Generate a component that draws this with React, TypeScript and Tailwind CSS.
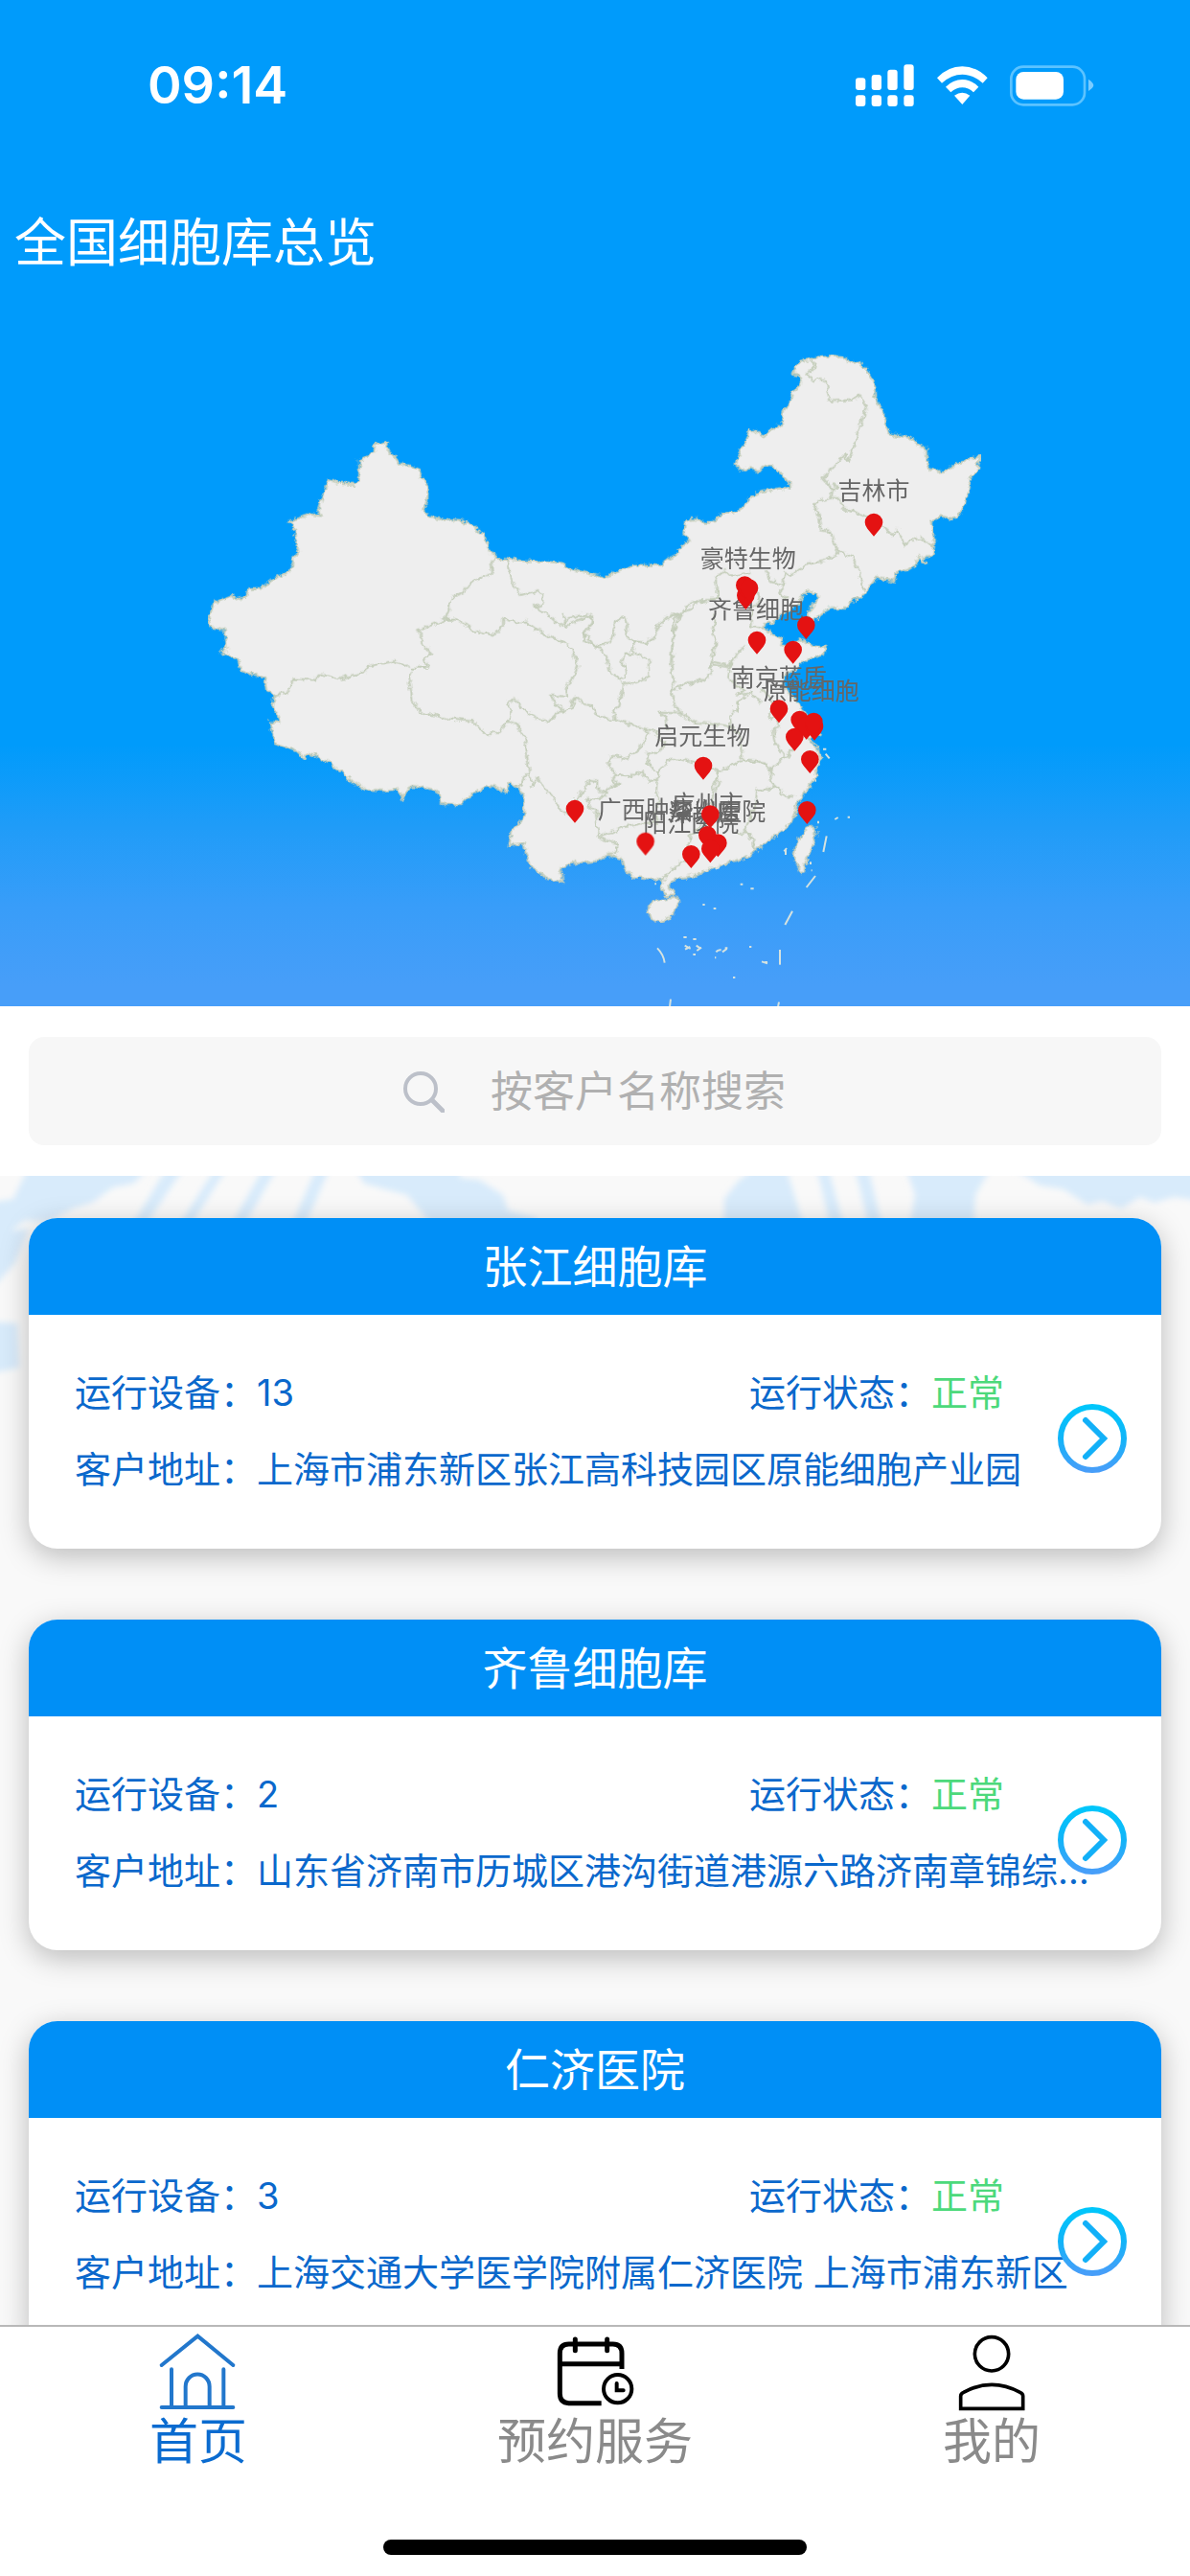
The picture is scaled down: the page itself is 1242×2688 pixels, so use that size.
import { useState } from "react";

const outline =
  "M1175,1388 1195,1394 1215,1386 1212,1404 1220,1420 1236,1430 1250,1450 1275,1456 1312,1470 1322,1500 1340,1525 1338,1575 1325,1600 1345,1617 1385,1624 1440,1628 1475,1645 1510,1670 1520,1690 1535,1725 1555,1748 1585,1750 1640,1756 1700,1757 1760,1762 1780,1780 1820,1790 1860,1800 1895,1808 1940,1785 1990,1768 2065,1770 2090,1750 2120,1735 2122,1722 2160,1692 2140,1670 2145,1635 2165,1623 2185,1624 2210,1637 2230,1636 2260,1610 2300,1606 2325,1590 2340,1565 2380,1540 2410,1536 2440,1528 2475,1532 2474,1515 2460,1500 2440,1478 2420,1460 2390,1457 2375,1477 2350,1465 2320,1472 2303,1455 2315,1420 2335,1375 2350,1345 2395,1363 2420,1345 2445,1330 2450,1300 2455,1285 2485,1225 2508,1205 2505,1175 2480,1172 2490,1150 2510,1130 2540,1123 2570,1115 2615,1112 2640,1120 2660,1132 2685,1132 2700,1142 2722,1170 2730,1185 2738,1215 2740,1245 2755,1270 2765,1290 2772,1330 2785,1360 2820,1365 2850,1370 2880,1395 2900,1405 2902,1440 2910,1465 2935,1478 2960,1475 2980,1465 2990,1452 3020,1445 3040,1434 3072,1430 3062,1450 3058,1475 3035,1505 3030,1540 3025,1570 3008,1600 2995,1625 2948,1615 2915,1635 2922,1670 2925,1710 2920,1740 2890,1742 2900,1768 2875,1740 2865,1770 2840,1785 2805,1792 2800,1820 2745,1808 2720,1840 2700,1865 2665,1885 2645,1905 2600,1905 2575,1920 2550,1945 2530,1925 2540,1900 2565,1870 2550,1852 2515,1858 2500,1890 2460,1915 2420,1950 2395,1950 2392,1970 2420,1985 2450,2000 2445,2020 2480,2025 2490,2010 2510,1998 2540,2020 2560,2025 2585,2025 2580,2050 2540,2060 2515,2070 2490,2095 2450,2115 2455,2145 2470,2170 2490,2190 2505,2210 2525,2240 2550,2255 2570,2270 2570,2295 2525,2310 2545,2325 2560,2340 2570,2380 2560,2400 2550,2440 2520,2480 2495,2520 2490,2550 2475,2575 2450,2600 2420,2620 2395,2640 2370,2660 2340,2685 2280,2700 2240,2715 2210,2725 2180,2740 2110,2752 2092,2775 2110,2800 2085,2802 2073,2780 2075,2752 2040,2750 1980,2745 1955,2720 1950,2690 1905,2675 1870,2695 1835,2700 1800,2700 1755,2715 1762,2760 1740,2755 1710,2750 1690,2730 1660,2715 1645,2665 1640,2638 1595,2645 1600,2605 1625,2580 1640,2555 1640,2490 1610,2455 1595,2448 1585,2480 1550,2462 1530,2458 1500,2475 1470,2490 1445,2517 1380,2517 1378,2490 1365,2475 1330,2465 1290,2460 1270,2472 1260,2502 1250,2470 1200,2475 1145,2470 1105,2450 1070,2415 1030,2390 990,2365 965,2358 955,2375 930,2352 900,2340 860,2325 850,2290 845,2260 875,2260 868,2235 855,2215 860,2175 835,2165 828,2120 800,2115 755,2100 745,2065 720,2050 690,2040 710,2032 708,2000 700,1970 662,1965 652,1925 662,1915 670,1890 690,1878 710,1870 730,1865 738,1876 770,1870 780,1842 820,1840 850,1815 905,1790 915,1770 920,1745 935,1725 925,1690 920,1645 902,1632 935,1622 975,1610 1005,1615 995,1595 1010,1550 1028,1502 1060,1513 1105,1518 1125,1505 1125,1440 1145,1430 1170,1415Z";

const westBorders = [
  "M955,428 938,440 942,475 908,490 880,500 850,535 815,548 795,620 705,655 720,660 720,690 748,725 728,740 742,770 685,770",
  "M985,432 1003,500 1030,543 1085,528 1102,545 1095,575 1070,580 1110,600 1155,640 1180,615 1240,603 1255,610 1252,635 1228,660 1228,680 1262,705",
  "M795,620 825,620 870,640 880,655 950,667 975,640 975,615 1020,633 1045,625 1090,658 1150,685 1190,710 1210,765 1195,800 1170,840 1175,860 1125,857 1140,885 1165,905 1140,915 1120,938 1085,930 1045,905 1010,865 992,880 1000,910 990,938 965,975 915,975 880,938 800,930 720,910 690,875 680,820 690,780",
  "M262,855 300,848 320,805 385,808 405,790 465,805 540,785 555,765 635,750 680,768",
  "M990,938 1015,945 1045,995 1057,1105 1040,1110 1035,1135 1015,1140",
  "M1057,1105 1065,1138 1080,1112 1110,1150 1135,1180 1165,1228 1200,1230 1205,1175 1230,1150 1245,1120",
  "M1165,905 1190,895 1205,860",
];

const centralBorders = [
  "M362,342 410,330 430,265 455,250 462,275 460,310 480,325 520,333 545,320 560,280 600,245 630,240",
  "M362,342 375,345 400,380 410,425 445,448 462,430 460,405 445,395 455,365 480,365 530,385 532,440 495,455 450,460 440,530 420,545 425,570",
  "M480,365 485,340 495,325",
  "M280,530 305,500 330,525 355,530 370,565 440,575 515,600 560,612",
  "M262,240 270,280 350,245 355,270 330,300 362,342",
  "M630,240 610,265 605,330 600,400 610,465 600,485 615,530 630,550 565,548 580,560 590,600",
  "M630,240 670,225 680,205 740,195",
  "M740,265 730,300 745,330 730,370 725,430 700,450 635,465 600,485",
  "M730,400 790,410",
  "M630,550 670,580 720,585 800,600",
  "M840,500 805,515 805,545 785,560 790,600 815,620 825,700",
  "M515,600 530,615 515,650 480,680 450,700 440,690 410,690 405,720 430,745 415,770 440,775",
  "M555,612 580,650 570,670 525,680 530,710 560,740 600,695 650,700 700,715 750,735 825,700 900,710",
  "M430,745 470,755 490,735 520,745 530,770 555,760",
  "M560,730 555,800 565,820 550,860 560,890",
  "M345,760 370,765 370,795 400,800 405,785 440,775 425,760",
  "M400,800 375,825 340,820 345,850 375,860 365,890 375,935 400,930 450,910 520,895 560,900",
  "M375,935 380,945 430,960 430,985 405,995",
  "M660,930 655,980 640,1015 600,1045 575,1070",
  "M660,930 700,905 740,890",
  "M800,925 850,930 865,985",
  "M750,735 735,780 730,830 740,870",
  "M575,1125 610,1122",
];

const northBorders = [
  "M440,103 452,125 430,153 450,172 470,165 485,175 497,235 575,232 590,215 615,255 585,330 580,365 555,430 545,405 475,475 505,510 500,540 535,540 540,575 575,582 600,590 640,620 665,630 695,655 710,640 735,685 755,672 780,665 825,690",
  "M505,495 520,502 510,515 498,510",
  "M500,540 450,555 465,600 470,640 500,645 520,700 570,725 600,800 602,830",
  "M525,700 520,715 480,735 420,750 380,780 360,770 350,812 310,800 300,765",
  "M350,812 340,840 365,855",
  "M0,912 30,905 60,870 110,855 145,855 145,830 140,790 170,765 190,785 250,770",
  "M270,830 280,860 255,880 250,940 290,950",
  "M140,900 130,960 145,990 125,1050 190,1065 200,1035 235,1000",
  "M30,905 10,960 5,1020 10,1080",
];

const eastBorders = [
  "M310,390 300,440 320,460 350,480 330,495 370,490 400,520",
  "M400,480 430,500 440,530 430,560 465,590 440,605 445,640 475,690 430,730 445,750",
  "M475,690 500,670 510,660",
];

const southBorders = [
  "M585,40 640,45 680,70 670,90 675,110 690,125 630,135 625,180 600,240 590,265 615,285 630,320",
  "M690,125 720,150 750,155",
  "M505,75 510,110 500,140",
];

const islands = [
  "M290,505 305,480 340,475 385,468 388,485 370,510 360,535 330,548 295,535Z",
  "M768,390 745,350 750,310 765,280 780,260 800,245 815,255 812,290 800,320 785,345 778,388Z",
];

const dashes = [
  "M848,277 838,327",
  "M813,402 785,438",
  "M741,512 718,555",
  "M702,633V680",
  "M318,628Q338,648 341,674",
  "M360,788 357,812",
  "M699,797 696,812",
];

const reefs = [
  "M400,594h10M430,600h10M404,620l18,10M405,632l16,-8M440,620l12,8M442,636l14,-10M430,648h8",
  "M502,640Q508,632 518,634M522,640l14,-10M530,628h8M498,658h4",
  "M645,670l18,6M655,672h8M606,624h7M555,720h7",
  "M578,428h8M610,442h10M460,492h7M494,504h8M310,427h5",
  "M715,325l8,-10M720,318v18M874,225l10,-6M914,218h7M798,358v8M800,385h3M822,230v8",
  "M837,5h10M845,20l12,14M812,104h4M486,375h6M500,380l12,-4",
  "M838,-430h10M860,-440h8M852,-445l6,8",
];

// head centre of every pin, later ones are drawn on top
const pins = [
  [2736, 1636], [2335, 1865], [2332, 1833], [2346, 1842], [2524, 1958], [2370, 2005],
  [2483, 2035], [2439, 2220], [2504, 2254], [2488, 2308], [2525, 2272], [2550, 2275],
  [2548, 2260], [2536, 2378], [2202, 2398], [1800, 2533], [2527, 2537], [2224, 2550],
  [2215, 2615], [2248, 2640], [2224, 2658], [2164, 2675], [2021, 2635],
];

const labels = [
  { name: "吉林市", x: 2736, y: 1535 },
  { name: "豪特生物", x: 2342, y: 1748 },
  { name: "齐鲁细胞", x: 2367, y: 1907 },
  { name: "南京蓝盾", x: 2438, y: 2121 },
  { name: "原能细胞", x: 2540, y: 2163 },
  { name: "启元生物", x: 2200, y: 2303 },
  { name: "广西肿瘤", x: 2021, y: 2536 },
  { name: "深圳库", x: 2205, y: 2544 },
  { name: "广州市", x: 2215, y: 2518 },
  { name: "华大医院", x: 2248, y: 2540 },
  { name: "阳江医院", x: 2164, y: 2578 },
];

const banks = [
  { name: "张江细胞库", devices: 13, status: "正常", address: "上海市浦东新区张江高科技园区原能细胞产业园" },
  { name: "齐鲁细胞库", devices: 2, status: "正常", address: "山东省济南市历城区港沟街道港源六路济南章锦综…" },
  { name: "仁济医院", devices: 3, status: "正常", address: "上海交通大学医学院附属仁济医院 上海市浦东新区" },
];

function StatusBar() {
  return (
    <div className="flex h-[178px] items-center justify-between pr-[100px] pl-[154px]">
      <span className="text-[54px] leading-none font-semibold">09:14</span>
      <svg className="h-[44px] w-[250px]" viewBox="90 140 750 132" fill="#fff">
        <rect x="93" y="183" width="31" height="38" rx="9" />
        <rect x="143" y="173" width="31" height="48" rx="9" />
        <rect x="193" y="157" width="31" height="64" rx="9" />
        <rect x="244" y="141" width="31" height="80" rx="9" />
        <rect x="93" y="237" width="31" height="35" rx="9" />
        <rect x="143" y="237" width="31" height="35" rx="9" />
        <rect x="193" y="237" width="31" height="35" rx="9" />
        <rect x="244" y="237" width="31" height="35" rx="9" />
        <path d="M348,183Q382,147 427,147T506,183L491,199Q461,172 427,172T363,199Z" />
        <path d="M375,211Q398,188 427,188T478,211L462,228Q446,213 427,213T391,228Z" />
        <path d="M402,238Q427,220 451,238L427,266Z" />
        <rect x="580" y="148" width="230" height="119" rx="38" fill="none" stroke="#5cc3ff" strokeWidth="8" />
        <rect x="595" y="164" width="149" height="86" rx="24" />
        <path d="M822,187Q838,198 838,206T822,224Z" fill="#7accff" />
      </svg>
    </div>
  );
}

function Borders({ paths, shift }: { paths: string[]; shift: string }) {
  return (
    <g transform={shift}>
      {paths.map((d) => (
        <path key={d} d={d} />
      ))}
    </g>
  );
}

function ChinaMap() {
  return (
    <svg className="block w-full" viewBox="0 1020 3726 2130" role="img" aria-label="全国细胞库分布">
      <defs>
        <filter id="coast" x="0" y="0" width="100%" height="100%" colorInterpolationFilters="sRGB">
          <feTurbulence type="fractalNoise" baseFrequency="0.05" numOctaves="3" seed="4" />
          <feDisplacementMap in="SourceGraphic" scale="22" xChannelSelector="R" yChannelSelector="G" />
        </filter>
      </defs>
      <g filter="url(#coast)" fill="none" stroke="#c5cebb" strokeWidth="6" strokeLinejoin="round">
        <path d={outline} fill="#eee" />
        <Borders paths={westBorders} shift="translate(600 1320)" />
        <Borders paths={centralBorders} shift="translate(1500 1680)" />
        <Borders paths={northBorders} shift="translate(2100 1020)" />
        <Borders paths={eastBorders} shift="translate(1980 1680)" />
        <Borders paths={southBorders} shift="translate(1740 2340)" />
        <g fill="#eee">
          <Borders paths={islands} shift="translate(1740 2340)" />
        </g>
      </g>
      <g fill="none" stroke="#d5e2df" strokeWidth="6">
        <Borders paths={dashes} shift="translate(1740 2340)" />
        <Borders paths={reefs} shift="translate(1740 2340)" />
      </g>
      <g fill="#666" fontSize="75" textAnchor="middle" dominantBaseline="central">
        {labels.map((label) => (
          <text key={label.name} x={label.x} y={label.y}>
            {label.name}
          </text>
        ))}
      </g>
      <g fill="#e41212">
        {pins.map(([x, y]) => (
          <path
            key={`${x}-${y}`}
            transform={`translate(${x} ${y})`}
            d="M0,-29A28,28 0 0 1 28,-1Q28,10 20,19L0,43L-20,19Q-28,10 -28,-1A28,28 0 0 1 0,-29Z"
          />
        ))}
      </g>
    </svg>
  );
}

function SearchBar() {
  return (
    <div className="bg-white px-[30px] py-8">
      <label className="flex h-[113px] items-center justify-center gap-[48px] rounded-2xl bg-[#f7f7f7]">
        <svg className="h-[44px] w-[44px]" viewBox="0 0 44 44" fill="none" stroke="#bcc0c9" strokeWidth="4">
          <circle cx="19" cy="19" r="16" />
          <path d="M31 31l11 11" strokeWidth="5" strokeLinecap="round" />
        </svg>
        <input
          type="text"
          aria-label="按客户名称搜索"
          placeholder="按客户名称搜索"
          className="w-[310px] bg-transparent text-[44px] leading-[60px] outline-none placeholder:text-[#b0b0b0]"
        />
      </label>
    </div>
  );
}

function Backdrop() {
  return (
    <svg className="absolute top-0 left-0 w-full" viewBox="0 0 1242 240" fill="#d8ebfb" aria-hidden="true">
      <defs>
        <filter id="soft">
          <feGaussianBlur stdDeviation="3" />
        </filter>
      </defs>
      <g filter="url(#soft)">
        <path d="M30,-10H155L140,8 118,12 96,28 76,34 50,48 26,46 8,60 -10,60V28L14,24Z" />
        <path d="M175,-10h18l-40,60h-14zM226,-10h12l-38,60h-12zM276,-10h14l-34,60h-14zM331,-10h14l-26,60h-14z" />
        <path d="M370,-10H480V2L500,4 525,20 530,36 560,44V50H450L425,20 380,8Z" />
        <path d="M790,-10H820L838,50H756V24L770,6Z" />
        <path d="M852,-10h12l16,60h-14zM892,-10h14l14,60h-14z" />
        <path d="M945,-10H1035L1018,20 1016,50H950L955,20Z" />
        <path d="M1055,-10H1252V26L1225,22 1205,28 1190,22 1170,34 1150,26 1135,30 1110,14 1085,10Z" />
        <path d="M-10,60 30,55 16,90 -10,120ZM-10,152 18,154 20,200 -10,206Z" />
      </g>
    </svg>
  );
}

function BankCard({ bank }: { bank: (typeof banks)[number] }) {
  return (
    <article className="relative rounded-[30px] bg-white shadow-[0_8px_30px_rgba(0,0,0,0.25)]">
      <h2 className="rounded-t-[30px] bg-[#008ff6] text-center text-[47px] leading-[101px] text-white">{bank.name}</h2>
      <div className="flex h-[244px] flex-col px-[48px] pt-[41px] text-[38px] leading-[80px] text-[#0a68cc]">
        <div className="flex">
          <p className="flex-1">运行设备：{bank.devices}</p>
          <p className="w-[382px]">
            运行状态：<span className="text-[#4cd97b]">{bank.status}</span>
          </p>
        </div>
        <p className="overflow-hidden whitespace-nowrap">客户地址：{bank.address}</p>
      </div>
      <button type="button" aria-label={`查看${bank.name}`} className="absolute top-[193px] right-[35px]">
        <svg className="h-[74px] w-[74px]" viewBox="0 0 74 74" fill="none" strokeWidth="6">
          <defs>
            <linearGradient id="ring" x1="0" y1="0" x2="0" y2="1">
              <stop offset="0" stopColor="#00c6fb" />
              <stop offset="0.5" stopColor="#12b4f8" />
              <stop offset="1" stopColor="#479ef9" />
            </linearGradient>
          </defs>
          <circle cx="37" cy="37" r="33" stroke="url(#ring)" />
          <path d="M30 18l19 19-19 19" stroke="#12b0f8" strokeLinecap="round" />
        </svg>
      </button>
    </article>
  );
}

function HomeIcon() {
  return (
    <svg className="h-[84px] w-[84px]" viewBox="105 63 252 252" fill="none" stroke="#2277cc" strokeWidth="12" strokeLinecap="round">
      <path d="M116,171 229,80 340,171M147,184V300M310,184V300M116,303H340" />
      <path d="M191,300V238A37,38 0 0 1 266,238V300" />
    </svg>
  );
}

function BookingIcon() {
  return (
    <svg className="h-[84px] w-[84px]" viewBox="54 33 252 252" fill="none" stroke="#000" strokeWidth="15">
      <path d="M200,260H98Q70,258 70,230V104Q70,75 98,75H236Q264,75 264,104V153M70,137H264" />
      <path d="M118,60V95M218,60V95" strokeLinecap="round" />
      <circle cx="251" cy="215" r="44" strokeWidth="12" />
      <path d="M248,198V220H269" strokeWidth="12" strokeLinecap="round" />
    </svg>
  );
}

function MineIcon() {
  return (
    <svg className="h-[84px] w-[84px]" viewBox="1294 33 252 252" fill="none" stroke="#000" strokeWidth="11">
      <circle cx="1420" cy="106" r="53" />
      <path d="M1323,277V238Q1323,230 1332,226Q1420,178 1509,226Q1518,230 1518,238V277Z" />
    </svg>
  );
}

const tabs = [
  { name: "首页", Icon: HomeIcon },
  { name: "预约服务", Icon: BookingIcon },
  { name: "我的", Icon: MineIcon },
];

export default function App() {
  const [active, setActive] = useState("首页");

  return (
    <div className="flex h-screen flex-col bg-[#f9f9f9] font-[Inter,'Noto_Sans_CJK_SC',sans-serif]">
      <header className="bg-[linear-gradient(#009bfb_74%,#1f9cf8_82%,#389df9_90%,#479ef9_98%)] text-white">
        <StatusBar />
        <h1 className="pb-[10px] pl-[15px] text-[54px] leading-[152px]">全国细胞库总览</h1>
        <ChinaMap />
      </header>
      <SearchBar />
      <main className="relative min-h-0 flex-1 overflow-y-auto [scrollbar-width:none]">
        <Backdrop />
        <div className="relative flex flex-col gap-[74px] px-[30px] py-[44px]">
          {banks.map((bank) => (
            <BankCard key={bank.name} bank={bank} />
          ))}
        </div>
      </main>
      <nav className="border-t-2 border-[#b8b8b8] bg-white pb-[22px]">
        <div className="grid grid-cols-3 pt-1">
          {tabs.map(({ name, Icon }) => (
            <button
              key={name}
              type="button"
              onClick={() => setActive(name)}
              className={
                name === active
                  ? "flex flex-col items-center text-[51px] leading-[64px] text-[#0a6bd0]"
                  : "flex flex-col items-center text-[51px] leading-[64px] text-[#8a8a8a]"
              }
            >
              <Icon />
              {name}
            </button>
          ))}
        </div>
        <div className="mx-auto mt-[70px] h-4 w-[442px] rounded-full bg-black" />
      </nav>
    </div>
  );
}
